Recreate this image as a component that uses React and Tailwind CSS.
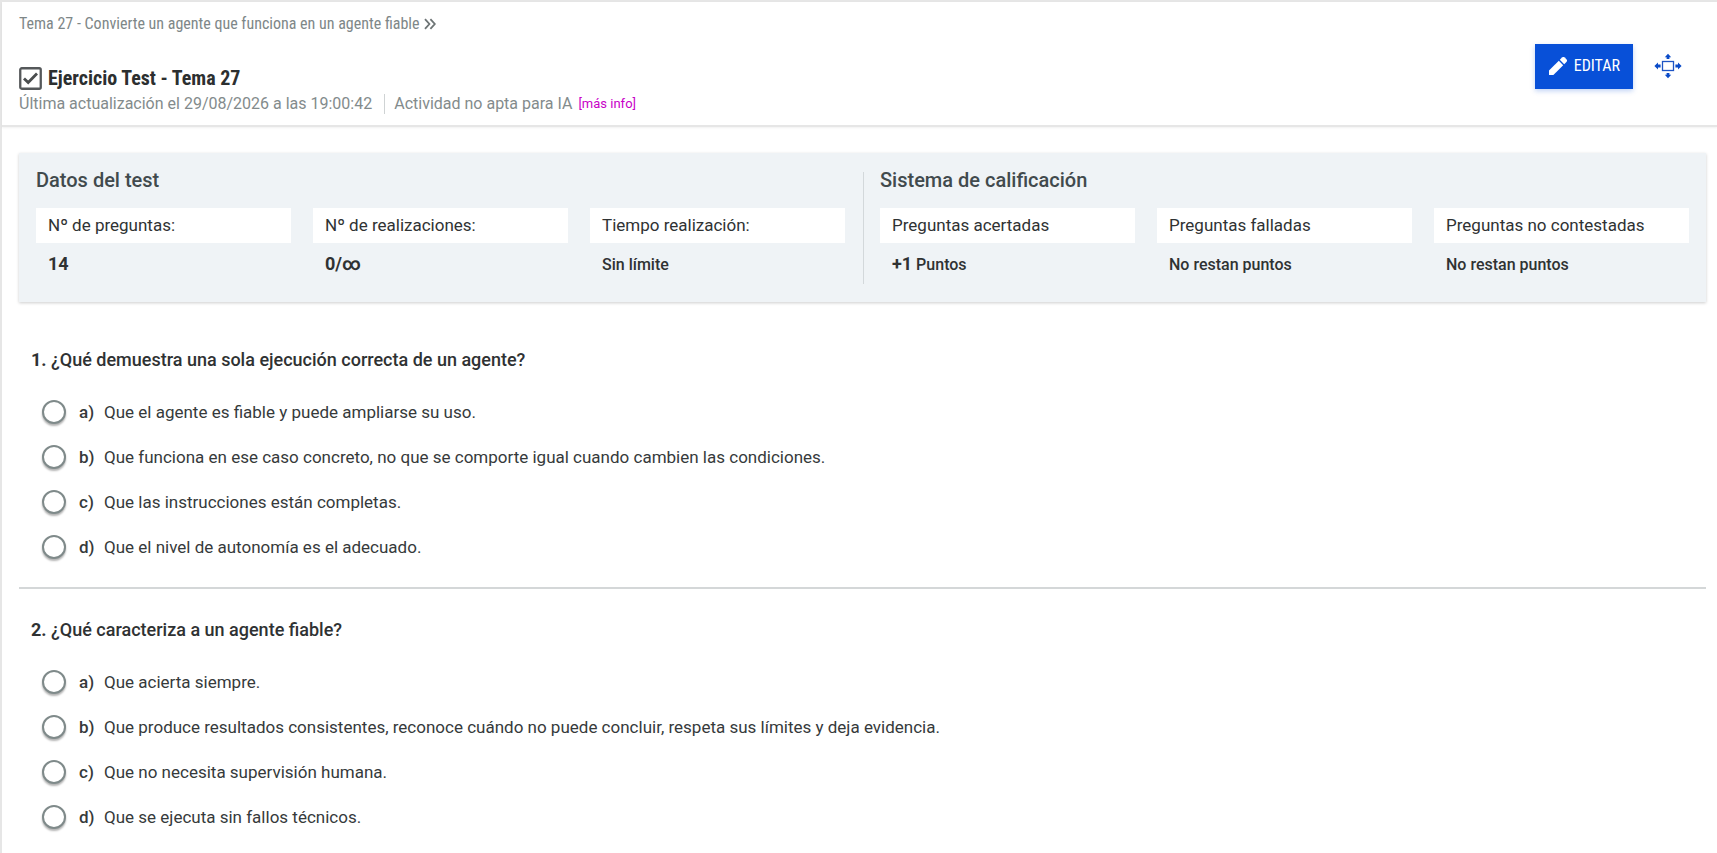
import React from "react";

const testData = [
  { label: "Nº de preguntas:", value: <b className="text-lg leading-6 font-bold">14</b> },
  { label: "Nº de realizaciones:", value: <b className="text-lg leading-6 font-bold">0/∞</b> },
  { label: "Tiempo realización:", value: "Sin límite" },
];

const grading = [
  {
    label: "Preguntas acertadas",
    value: (
      <>
        <b className="text-lg leading-6 font-bold">+1</b> Puntos
      </>
    ),
  },
  { label: "Preguntas falladas", value: "No restan puntos" },
  { label: "Preguntas no contestadas", value: "No restan puntos" },
];

const questions = [
  {
    text: "¿Qué demuestra una sola ejecución correcta de un agente?",
    options: [
      "Que el agente es fiable y puede ampliarse su uso.",
      "Que funciona en ese caso concreto, no que se comporte igual cuando cambien las condiciones.",
      "Que las instrucciones están completas.",
      "Que el nivel de autonomía es el adecuado.",
    ],
  },
  {
    text: "¿Qué caracteriza a un agente fiable?",
    options: [
      "Que acierta siempre.",
      "Que produce resultados consistentes, reconoce cuándo no puede concluir, respeta sus límites y deja evidencia.",
      "Que no necesita supervisión humana.",
      "Que se ejecuta sin fallos técnicos.",
    ],
  },
];

function CheckboxIcon() {
  return (
    <svg width="23" height="23" viewBox="0 0 23 23" fill="none" aria-hidden="true" className="shrink-0">
      <rect x="1.25" y="1.25" width="20.5" height="20.5" rx="1.5" stroke="#55585a" strokeWidth="2.3" />
      <path d="M5 11.4l4.2 4.1 8.8-8.9" stroke="#4a4d4e" strokeWidth="2.8" />
    </svg>
  );
}

function ChevronsIcon() {
  return (
    <svg width="12" height="12" viewBox="0 0 12 12" fill="none" aria-hidden="true">
      <path d="M1 1.2l4.4 4.8L1 10.8M6.4 1.2l4.4 4.8-4.4 4.8" stroke="#6d7475" strokeWidth="1.8" />
    </svg>
  );
}

function PencilIcon() {
  return (
    <svg width="18" height="18" viewBox="0 0 18 18" fill="currentColor" aria-hidden="true">
      <path d="M0 13.6V18h4.4L14.2 8.2 9.8 3.8z" />
      <path d="M10.8 2.8L13 .6a2 2 0 0 1 2.8 0l1.6 1.6a2 2 0 0 1 0 2.8l-2.2 2.2z" />
    </svg>
  );
}

function ExpandIcon() {
  return (
    <svg width="28" height="26" viewBox="0 0 28 26" aria-hidden="true">
      <rect x="8.5" y="8.5" width="11" height="9" fill="none" stroke="#1d54c4" strokeWidth="1.3" />
      <g fill="#0a4bc8">
        <path d="M14 .8l3.2 3.4h-1.8V6h-2.8V4.2h-1.8z" />
        <path d="M14 25.2l3.2-3.4h-1.8V20h-2.8v1.8h-1.8z" />
        <path d="M.4 13L4 9.6v1.9h2.6v3H4v1.9z" />
        <path d="M27.6 13L24 9.6v1.9h-2.6v3H24v1.9z" />
      </g>
    </svg>
  );
}

function DataGroup({ title, items }) {
  return (
    <section className="min-w-0 flex-1 pb-1.5">
      <h2 className="text-xl leading-6 font-medium text-[#414a4d]">{title}</h2>
      <dl className="mt-4 grid grid-cols-3 gap-[22px]">
        {items.map((item) => (
          <div key={item.label}>
            <dt className="bg-white px-3 text-[17px] leading-[35px] text-[#2f3233]">{item.label}</dt>
            <dd className="mt-[9px] px-3 text-base leading-[26px] font-medium text-[#2f3233]">{item.value}</dd>
          </div>
        ))}
      </dl>
    </section>
  );
}

function Question({ number, text, options }) {
  return (
    <fieldset className="px-3">
      <legend className="text-lg leading-6 font-medium text-[#2f3233]">
        <b className="font-bold">{number}.</b> {text}
      </legend>
      <div className="flex flex-col gap-[21px] pt-7 pl-[11px]">
        {options.map((option, index) => (
          <label key={option} className="flex items-center text-[17px] leading-6 text-[#363a3b]">
            <input
              type="radio"
              name={`question-${number}`}
              className="size-6 shrink-0 appearance-none rounded-full border-2 border-[#7f8a8a] bg-white shadow-[0_2px_2px_rgba(0,0,0,0.3)] checked:bg-[#0850d8]"
            />
            <span className="ml-[13px] w-[25px] font-medium">{"abcd"[index]})</span>
            <span>{option}</span>
          </label>
        ))}
      </div>
    </fieldset>
  );
}

export default function App() {
  return (
    <div className="min-h-screen border-t-2 border-l-2 border-[#e6e6e6] bg-white font-['Roboto',sans-serif]">
      <header className="flex items-start justify-between border-b-2 border-[#e6e6e6] pr-[35px] pb-[9px] pl-[17px] shadow-[0_1px_2px_rgba(0,0,0,0.06)]">
        <div>
          <a
            href="#tema-27"
            className="mt-[10px] flex items-center gap-[5px] font-['Roboto_Condensed',Roboto,sans-serif] text-base leading-6 text-[#7e8788]"
          >
            Tema 27 - Convierte un agente que funciona en un agente fiable
            <ChevronsIcon />
          </a>
          <div className="mt-[29px] flex items-center gap-1.5">
            <CheckboxIcon />
            <h1 className="font-['Roboto_Condensed',Roboto,sans-serif] text-xl leading-[27px] font-bold text-[#2c2f30]">
              Ejercicio Test - Tema 27
            </h1>
          </div>
          <div className="flex items-center text-base leading-6 text-[#838b8c]">
            <span>Última actualización el 29/08/2026 a las 19:00:42</span>
            <span className="ml-3 h-5 border-l border-[#cfd3d4]" />
            <span className="ml-[9px]">Actividad no apta para IA</span>
            <a href="#mas-info" className="ml-1.5 text-[13px] text-[#c800c8]">
              [más info]
            </a>
          </div>
        </div>
        <div className="mt-[42px] flex items-center gap-[21px]">
          <button
            type="button"
            className="flex h-[45px] items-center gap-[7px] bg-[#0850d8] pr-[13px] pb-0.5 pl-3.5 font-['Roboto_Condensed',Roboto,sans-serif] text-base text-white shadow-[0_2px_5px_rgba(8,80,216,0.25)]"
          >
            <PencilIcon />
            EDITAR
          </button>
          <button type="button" aria-label="Pantalla completa" className="pb-0.5">
            <ExpandIcon />
          </button>
        </div>
      </header>

      <main className="pt-[26px] pr-[11px] pl-[17px]">
        <div className="flex bg-[#eff3f6] px-[17px] pt-[15px] pb-[18px] shadow-[0_1px_3px_rgba(0,0,0,0.2)]">
          <DataGroup title="Datos del test" items={testData} />
          <div className="mr-4 ml-[18px] mt-1 border-l border-[#d3d8db]" />
          <DataGroup title="Sistema de calificación" items={grading} />
        </div>

        <div className="pt-[46px]">
          <Question number={1} {...questions[0]} />
          <hr className="mt-7 mb-[29px] border-t-2 border-[#d4d7d8]" />
          <Question number={2} {...questions[1]} />
        </div>
      </main>
    </div>
  );
}
